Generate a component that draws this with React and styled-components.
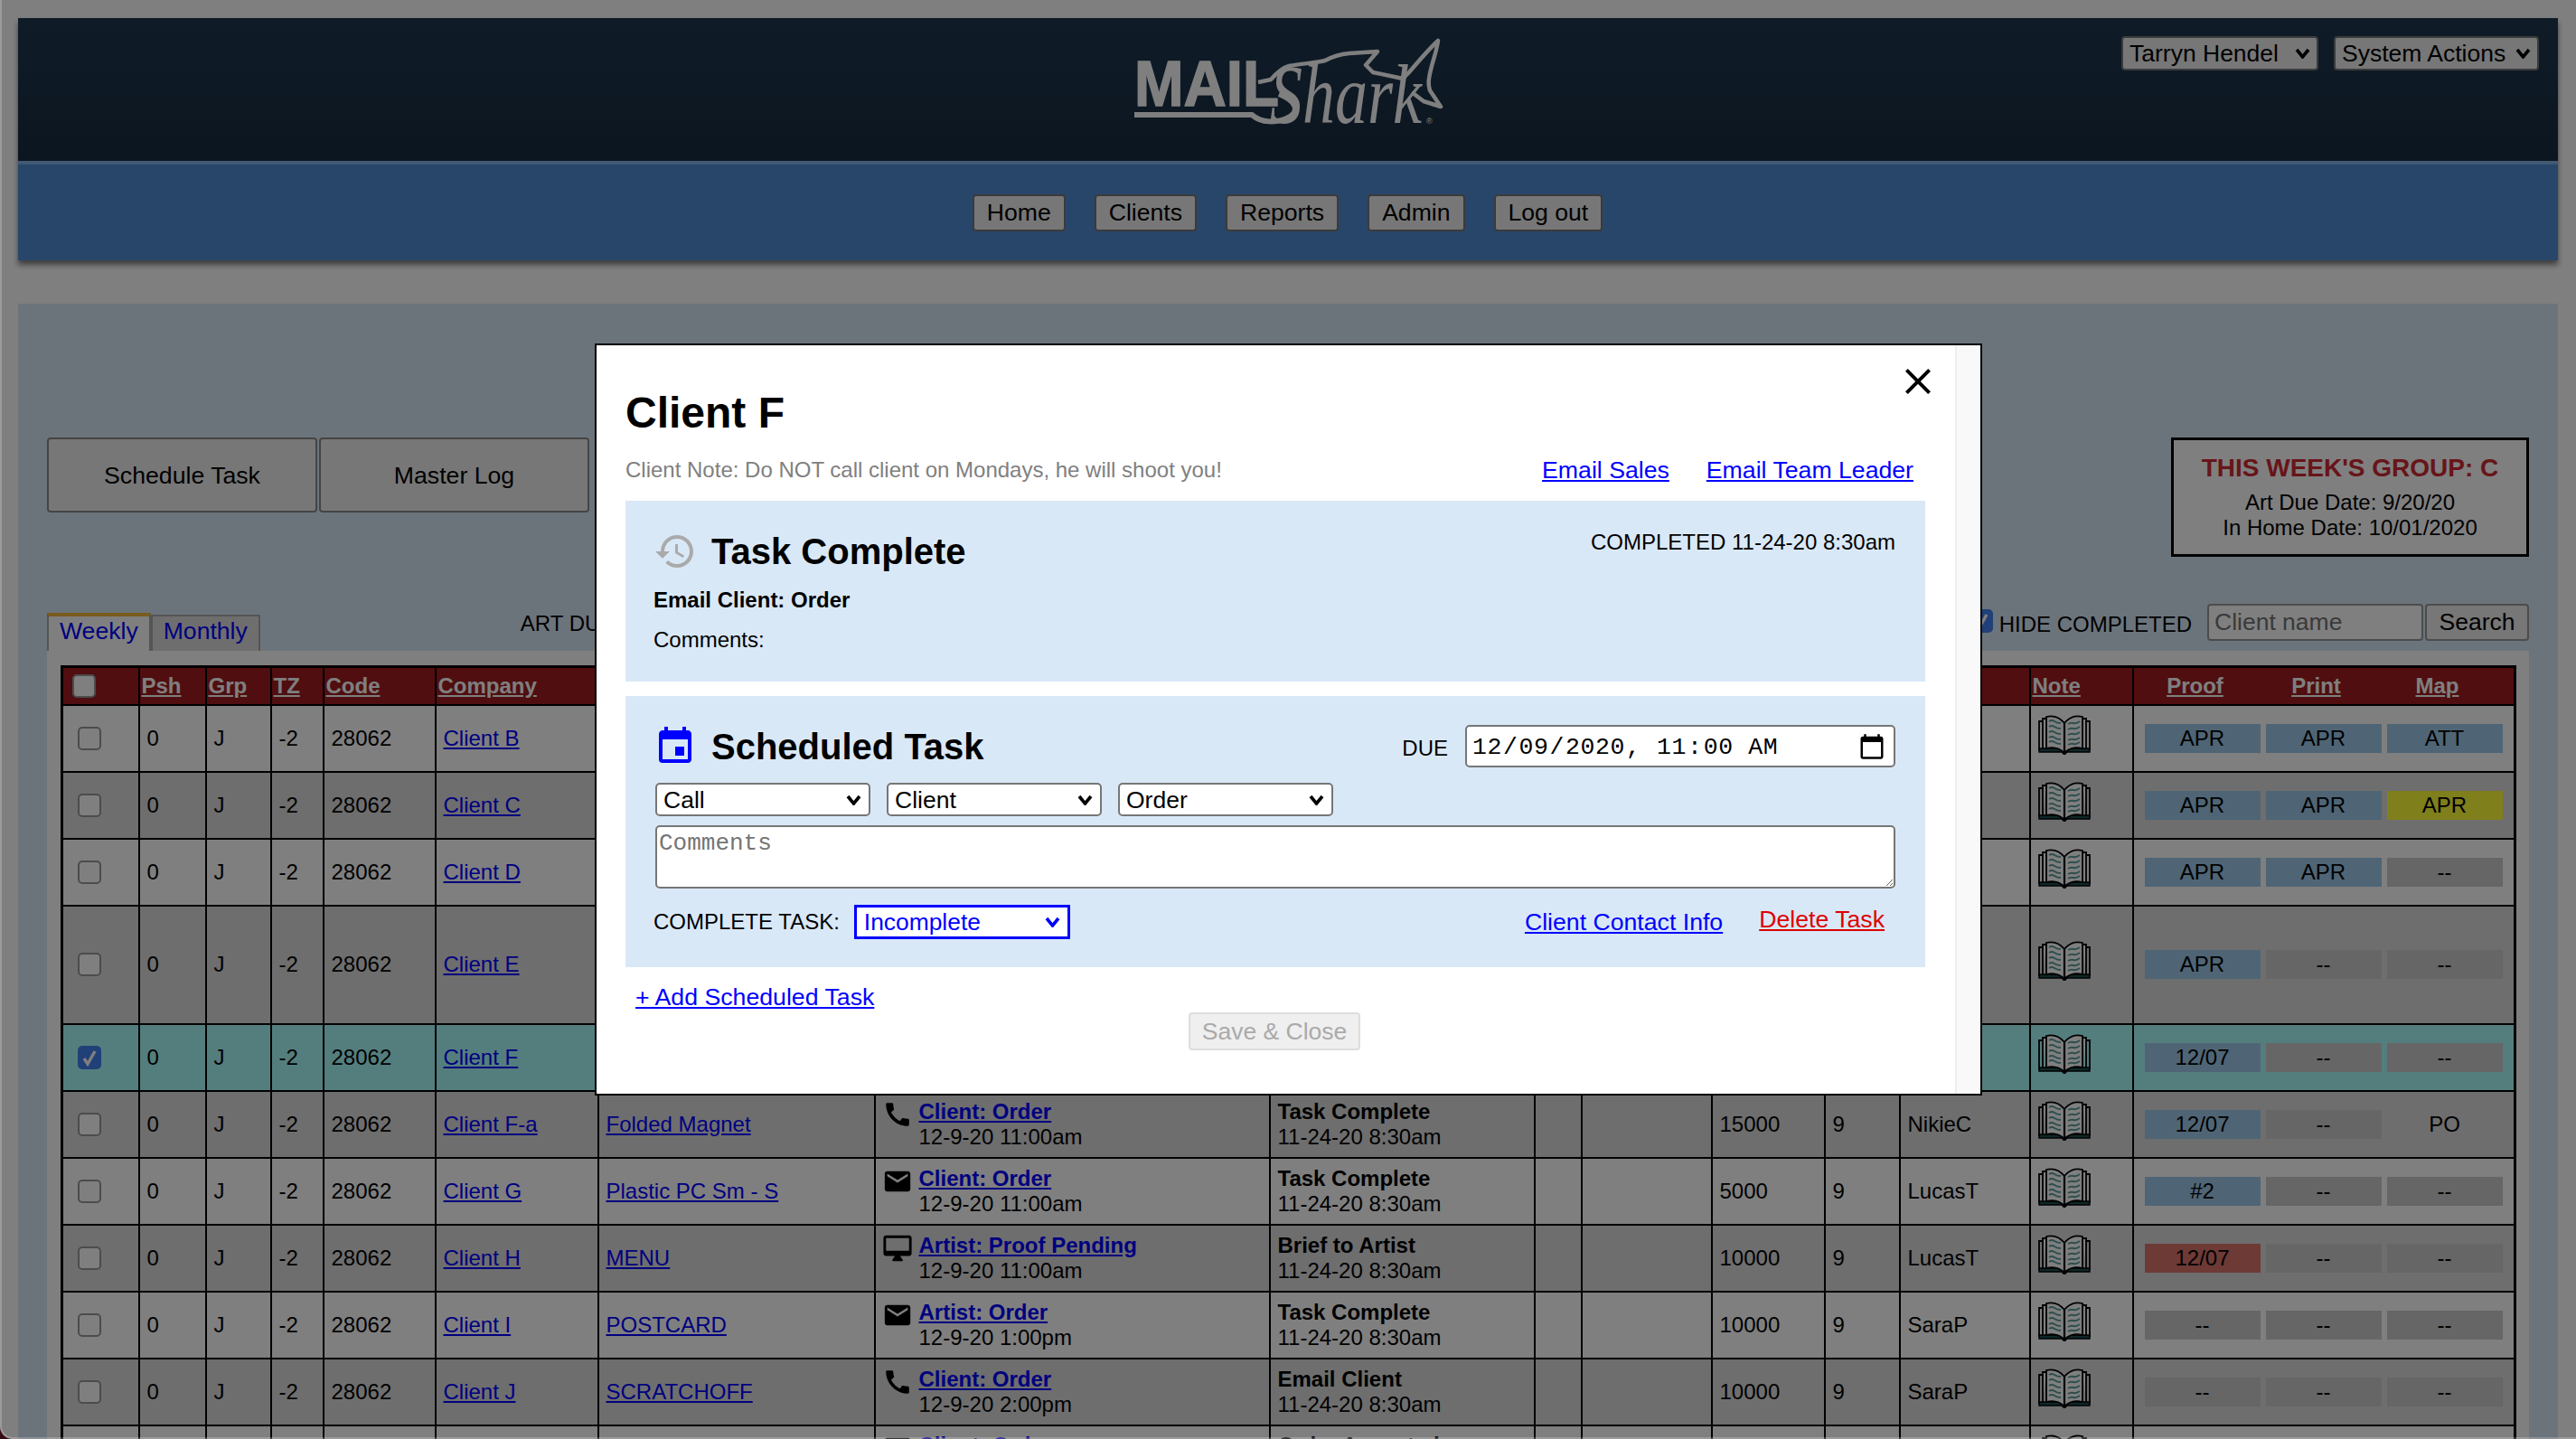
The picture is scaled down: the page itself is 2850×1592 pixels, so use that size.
import React from "react";
import styled, { createGlobalStyle } from "styled-components";
import { MdHistory, MdEvent, MdClose, MdCall, MdEmail } from "react-icons/md";

const chevron = (c) =>
  `url("data:image/svg+xml,${encodeURIComponent(
    `<svg xmlns='http://www.w3.org/2000/svg' viewBox='0 0 17 12'><path d='M2 2l6.5 8L15 2' fill='none' stroke='${c}' stroke-width='3.6'/></svg>`
  )}")`;

const checkMark = `url("data:image/svg+xml,${encodeURIComponent(
  `<svg xmlns='http://www.w3.org/2000/svg' viewBox='0 0 26 26'><path d='M7 14l4 6 8-14' fill='none' stroke='white' stroke-width='3.4'/></svg>`
)}")`;

const Global = createGlobalStyle`
  html, body { margin: 0; height: 100%; overflow: hidden; background: #fff; }
  body { font-family: "Liberation Sans", Arial, sans-serif; font-size: 24px; line-height: 28px; color: #000; }
  * { box-sizing: border-box; }
`;

const Page = styled.div`
  padding: 20px;
  width: 2850px;
`;

const TopBar = styled.header`
  box-shadow: 0 5px 6px rgba(0, 0, 0, 0.5);
`;

const BrandBar = styled.div`
  height: 158px;
  background: linear-gradient(#1e3850, #182c40);
  display: grid;
  grid-template-columns: 1fr auto 1fr;
  padding: 20px 21px 0 21px;
`;

const LogoSvg = styled.svg`
  display: block;
  width: 340px;
  height: 104px;
  margin-top: 4px;
  overflow: visible;
`;

const UserMenus = styled.div`
  display: flex;
  justify-content: flex-end;
  gap: 17px;
  align-items: flex-start;
`;

const HeadSelect = styled.select`
  appearance: none;
  width: ${(p) => p.$w}px;
  height: 38px;
  border: 2px solid #767676;
  border-radius: 4px;
  padding: 0 0 0 7px;
  font: 26.5px "Liberation Sans", Arial, sans-serif;
  color: #000;
  background: #efefef ${chevron("#000")} no-repeat right 7px center / 17px 12px;
`;

const NavBar = styled.nav`
  height: 110px;
  border-top: 4px solid #82b4ea;
  background: #508cd2;
  display: flex;
  justify-content: center;
  align-items: center;
  gap: 32px;
  padding-right: 1px;
`;

const NavButton = styled.button`
  height: 41px;
  padding: 0 14px;
  border: 2px solid #767676;
  border-radius: 4px;
  background: #efefef;
  font: 26.6px "Liberation Sans", Arial, sans-serif;
  color: #000;
`;

const Panel = styled.main`
  margin-top: 48px;
  background: #d9e8f7;
  padding: 148px 32px 0;
`;

const ActionRow = styled.div`
  display: flex;
  justify-content: space-between;
  align-items: flex-start;
`;

const BigButtons = styled.div`
  display: flex;
  gap: 2px;
`;

const BigButton = styled.button`
  width: 299px;
  height: 83px;
  border: 2px solid #8a8a8a;
  border-radius: 4px;
  background: #efefef;
  font: 26.67px "Liberation Sans", Arial, sans-serif;
  color: #000;
  padding-top: 2px;
`;

const GroupBox = styled.aside`
  width: 396px;
  height: 132px;
  border: 3px solid #000;
  background: #fff;
  text-align: center;
  padding-top: 14px;
`;

const GroupTitle = styled.div`
  font-size: 28px;
  font-weight: 700;
  line-height: 34px;
  color: #cf2a32;
  margin-bottom: 7px;
`;

const Toolbar = styled.div`
  margin-top: 52px;
  height: 52px;
  display: flex;
  align-items: flex-start;
`;

const Tabs = styled.div`
  align-self: flex-end;
  display: flex;
  align-items: flex-end;
`;

const Tab = styled.a`
  height: ${(p) => (p.$active ? 42 : 40)}px;
  padding: 0 12px;
  border: 2px solid #aaa;
  border-bottom: 0;
  border-top: ${(p) => (p.$active ? "4px solid #f0b63a" : "2px solid #aaa")};
  background: ${(p) => (p.$active ? "#fff" : "#ddd")};
  color: #00f;
  font-size: 26.6px;
  line-height: 33px;
`;

const ArtDue = styled.div`
  margin: 8px 0 0 288px;
  white-space: nowrap;
`;

const SearchTools = styled.div`
  margin-left: auto;
  display: flex;
  align-items: flex-start;
`;

const Check = styled.input.attrs({ type: "checkbox", readOnly: true })`
  appearance: none;
  margin: 0;
  width: 26px;
  height: 26px;
  border: 2px solid #999;
  border-radius: 5px;
  background: #fff;
  &:checked {
    border: 0;
    background: #4280f0 ${checkMark} center / 100% 100%;
  }
`;

const ToolCheck = styled(Check)`
  margin-top: 6px;
`;

const HideLabel = styled.label`
  margin: 9px 17px 0 7px;
  white-space: nowrap;
  font-size: 24px;
`;

const SearchInput = styled.input`
  width: 239px;
  height: 41px;
  border: 2px solid #999;
  border-radius: 4px;
  padding: 0 6px;
  font: 26.5px "Liberation Sans", Arial, sans-serif;
  background: #fff;
  &::placeholder { color: #757575; }
`;

const SearchButton = styled.button`
  width: 115px;
  height: 41px;
  margin-left: 2px;
  border: 2px solid #999;
  border-radius: 4px;
  background: #efefef;
  font: 26.5px "Liberation Sans", Arial, sans-serif;
  color: #000;
`;

const TableCard = styled.section`
  background: #fff;
  padding: 16px 16px 0 15px;
`;

const Grid = styled.table`
  table-layout: fixed;
  border-collapse: collapse;
  width: 2714px;
  border: 3px solid #000;
`;

const HeadRow = styled.tr`
  height: 42px;
  background: #a01c20;
`;

const HeadCell = styled.th`
  border: 2px solid #000;
  padding: 0 0 0 2px;
  text-align: left;
  font-size: 24px;
  line-height: 26px;
  font-weight: 700;
  color: #fff;
  text-decoration: underline;
  white-space: nowrap;
`;

const HeadTrio = styled.div`
  display: flex;
  gap: 6px;
  padding-left: 2px;
`;

const HeadLabel = styled.span`
  width: 128px;
  text-align: center;
`;

const rowBg = { light: "#fff", dark: "#dcdcdc", picked: "#a8fcfc" };

const Row = styled.tr`
  height: ${(p) => p.$h}px;
  background: ${(p) => rowBg[p.$tone]};
`;

const Cell = styled.td`
  border: 2px solid #000;
  padding: 0 0 0 8px;
  font-size: 24px;
  line-height: 28px;
  white-space: nowrap;
  overflow: hidden;
`;

const CheckCell = styled(Cell)`
  padding-left: 16px;
  & > input { display: block; }
`;

const HeadCheckCell = styled.th`
  border: 2px solid #000;
  padding: 0 0 0 10px;
  & > input { display: block; }
`;

const RowLink = styled.a`
  color: #00f;
  text-decoration: underline;
`;

const TaskWrap = styled.div`
  display: flex;
  gap: 7px;
  margin-left: -1px;
  svg { flex: none; }
`;

const TaskLink = styled.a`
  display: block;
  font-weight: 700;
  color: #00f;
  text-decoration: underline;
`;

const StatusName = styled.div`
  font-weight: 700;
`;

const BookHolder = styled.div`
  margin-bottom: 8px;
  height: 44px;
  svg { display: block; }
`;

const PillRow = styled.div`
  display: flex;
  gap: 6px;
  padding-left: 4px;
`;

const pillBg = { blue: "#9ecaea", yellow: "#fefe38", red: "#dc746c", none: "#ccc", clear: "transparent" };

const Pill = styled.div`
  width: 128px;
  height: 32px;
  line-height: 32px;
  text-align: center;
  background: ${(p) => pillBg[p.$kind]};
`;

const Backdrop = styled.div`
  position: fixed;
  inset: 0;
  background: rgba(0, 0, 0, 0.5);
  z-index: 5;
`;

const Modal = styled.div`
  position: fixed;
  z-index: 6;
  left: 658px;
  top: 380px;
  width: 1535px;
  height: 832px;
  border: 2px solid #000;
  background: #fff;
  display: flex;
`;

const ModalBody = styled.div`
  flex: 1;
  padding: 48px 33px 0 32px;
  min-width: 0;
`;

const ScrollTrack = styled.div`
  width: 28px;
  border-left: 2px solid #eee;
  background: #f9f9f9;
`;

const CloseBtn = styled.button`
  position: absolute;
  top: 16px;
  right: 45px;
  padding: 0;
  border: 0;
  background: none;
  line-height: 0;
  color: #000;
`;

const ClientTitle = styled.h2`
  margin: 0;
  font-size: 48px;
  line-height: 54px;
  font-weight: 700;
`;

const NoteRow = styled.div`
  margin: 16px 0 14px;
  height: 40px;
  display: flex;
  align-items: center;
  justify-content: space-between;
  padding-right: 13px;
`;

const NoteText = styled.span`
  color: #808080;
  font-size: 24px;
`;

const LinkGroup = styled.div`
  display: flex;
  gap: ${(p) => p.$gap}px;
  align-items: center;
`;

const ModalLink = styled.a`
  color: ${(p) => (p.$danger ? "#dd0000" : "#00f")};
  text-decoration: underline;
  font-size: 26.67px;
  line-height: 30px;
  margin-bottom: ${(p) => (p.$danger ? 6 : 0)}px;
`;

const TaskPanel = styled.div`
  background: #d9e8f7;
  height: ${(p) => p.$h}px;
  margin-bottom: 16px;
  padding: 32px 33px 0 31px;
`;

const TaskHead = styled.div`
  display: flex;
  align-items: flex-start;
  justify-content: space-between;
  height: 48px;
`;

const TaskTitleWrap = styled.div`
  display: flex;
  align-items: center;
  gap: 16px;
  height: 48px;
  svg { display: block; }
`;

const TaskTitle = styled.h3`
  margin: 0;
  font-size: 40px;
  line-height: 48px;
  font-weight: 700;
`;

const Completed = styled.div``;

const TaskSummary = styled.div`
  margin-top: 16px;
  font-weight: 700;
`;

const TaskComments = styled.div`
  margin-top: 16px;
`;

const DueWrap = styled.div`
  display: flex;
  align-items: flex-start;
  gap: 19px;
`;

const DueLabel = styled.span`
  line-height: 52px;
`;

const DueInput = styled.input`
  width: 476px;
  height: 47px;
  border: 2px solid #767676;
  border-radius: 5px;
  padding: 3px 8px 0 5px;
  font: 26.5px "Liberation Mono", "Courier New", monospace;
  letter-spacing: 0.6px;
  background: #fff;
  color: #000;
  &::-webkit-datetime-edit-ampm-field { margin-left: 6px; }
  &::-webkit-calendar-picker-indicator {
    width: 32px;
    height: 32px;
    padding: 0;
    margin: 0;
  }
`;

const SelectRow = styled.div`
  margin: 16px 0 0 2px;
  display: flex;
  gap: 18px;
`;

const TaskSelect = styled.select`
  appearance: none;
  width: 238px;
  height: 37px;
  border: 2px solid #767676;
  border-radius: 5px;
  padding: 0 0 0 7px;
  font: 26.5px "Liberation Sans", Arial, sans-serif;
  color: #000;
  background: #fff ${chevron("#000")} no-repeat right 8px center / 17px 12px;
`;

const CommentsBox = styled.textarea`
  display: block;
  margin: 10px 0 0 2px;
  width: 1372px;
  height: 70px;
  border: 2px solid #767676;
  border-radius: 5px;
  padding: 3px 2px 2px;
  font: 26px/30px "Liberation Mono", "Courier New", monospace;
  background: #fff;
  &::placeholder { color: #757575; }
`;

const CompleteRow = styled.div`
  margin-top: 18px;
  display: flex;
  align-items: center;
  justify-content: space-between;
  padding-right: 12px;
`;

const CompleteLeft = styled.div`
  display: flex;
  align-items: center;
  gap: 16px;
`;

const StateSelect = styled.select`
  appearance: none;
  width: 239px;
  height: 38px;
  border: 3px solid #00f;
  border-radius: 0;
  padding: 0 0 0 8px;
  font: 26.4px "Liberation Sans", Arial, sans-serif;
  color: #00f;
  background: #fff ${chevron("#00f")} no-repeat right 8px center / 17px 12px;
`;

const AddLink = styled.a`
  display: block;
  width: max-content;
  margin: 19px 0 0 11px;
  color: #00f;
  text-decoration: underline;
  font-size: 26.7px;
  line-height: 28px;
`;

const SaveRow = styled.div`
  display: flex;
  justify-content: center;
  margin-top: 3px;
  padding-right: 2px;
`;

const SaveButton = styled.button`
  width: 190px;
  height: 42px;
  border: 2px solid #ddd;
  border-radius: 4px;
  background: #efefef;
  color: #aaa;
  font: 26.5px "Liberation Sans", Arial, sans-serif;
`;

const WindowEdge = styled.div`
  position: fixed;
  inset: 0;
  z-index: 9;
  pointer-events: none;
  border-left: 2px solid rgba(255, 255, 255, 0.22);
  border-bottom: 2px solid rgba(255, 255, 255, 0.22);
  border-bottom-left-radius: 14px;
  box-shadow: 0 0 0 30px #380a12;
`;

const Logo = () => (
  <LogoSvg viewBox="0 0 340 104" aria-label="MailShark logo">
    <text x="0" y="73" fontFamily="Liberation Sans" fontWeight="700" fontSize="71" fill="#fff" stroke="#fff" strokeWidth="1.5" textLength="160" lengthAdjust="spacingAndGlyphs">MAIL</text>
    <path d="M0 83H130C140 92 158 93 172 85C182 79 180 68 160 60" fill="none" stroke="#fff" strokeWidth="6" />
    <path d="M137 47L151 44C158 36 164 31 171 29C185 26 200 26 211 23C220 18 228 16 238 15L269 13L256 28L264 36L297 43L304 36C316 22 326 10 336 1C334 16 328 28 326 43C325 50 326 52 327 56L339 74L320 68L307 58" fill="none" stroke="#fff" strokeWidth="4.5" strokeLinejoin="round" />
    <text x="150" y="92" fontFamily="Liberation Serif" fontStyle="italic" fontSize="94" fill="#fff" textLength="168" lengthAdjust="spacingAndGlyphs">Shark</text>
    <text x="323" y="93" fontFamily="Liberation Sans" fontSize="9" fill="#fff">®</text>
  </LogoSvg>
);

const Book = () => (
  <svg width="58" height="44" viewBox="0 0 58 44" aria-hidden="true">
    <path d="M1 37V41H26L29 44L32 41H57V37Z" fill="#1d5050" stroke="#000" strokeWidth="1.4" />
    <path d="M1 39V7H5M57 39V7H53" fill="none" stroke="#000" strokeWidth="1.8" />
    <path d="M5 38V4H9M53 38V4H49" fill="#fff" stroke="#000" strokeWidth="1.8" />
    <path d="M9 37V2C17 0 24 3 29 9C34 3 41 0 49 2V37C41 35 34 37 29 42C24 37 17 35 9 37Z" fill="#fff" stroke="#000" strokeWidth="1.8" />
    <path d="M29 9V42" stroke="#000" strokeWidth="2.2" />
    {[9, 15, 21, 27, 32].map((y) => (
      <g key={y} fill="none" stroke="#5c9a9a" strokeWidth="2">
        <path d={`M12 ${y - 2}q3 -2 6 0t7 2`} />
        <path d={`M33 ${y + 1}q3 -2 6 -1t7 -2`} />
      </g>
    ))}
  </svg>
);

const Monitor = () => (
  <svg width="34" height="34" viewBox="0 0 24 24" aria-hidden="true">
    <path
      fill="#000"
      fillRule="evenodd"
      d="M21 2H3c-1.1 0-2 .9-2 2v12c0 1.1.9 2 2 2h7l-2 3v1h8v-1l-2-3h7c1.1 0 2-.9 2-2V4c0-1.1-.9-2-2-2zm0 12H3V4h18v10z"
    />
  </svg>
);

const KindIcon = ({ kind }) => {
  if (kind === "phone") return <MdCall size={34} color="#000" />;
  if (kind === "mail") return <MdEmail size={34} color="#000" />;
  return <Monitor />;
};

const widths = [85, 74, 72, 58, 124, 180, 306, 437, 293, 52, 144, 125, 83, 144, 114, 423];

const rows = [
  { client: "Client B", tone: "light", h: 74, pills: [["APR", "blue"], ["APR", "blue"], ["ATT", "blue"]] },
  { client: "Client C", tone: "dark", h: 74, pills: [["APR", "blue"], ["APR", "blue"], ["APR", "yellow"]] },
  { client: "Client D", tone: "light", h: 74, pills: [["APR", "blue"], ["APR", "blue"], ["--", "none"]] },
  { client: "Client E", tone: "dark", h: 131, pills: [["APR", "blue"], ["--", "none"], ["--", "none"]] },
  { client: "Client F", tone: "picked", h: 74, checked: true, pills: [["12/07", "blue"], ["--", "none"], ["--", "none"]] },
  { client: "Client F-a", tone: "dark", h: 74, product: "Folded Magnet", icon: "phone", task: "Client: Order", when: "12-9-20 11:00am", status: "Task Complete", qty: "15000", wk: "9", rep: "NikieC", pills: [["12/07", "blue"], ["--", "none"], ["PO", "clear"]] },
  { client: "Client G", tone: "light", h: 74, product: "Plastic PC Sm - S", icon: "mail", task: "Client: Order", when: "12-9-20 11:00am", status: "Task Complete", qty: "5000", wk: "9", rep: "LucasT", pills: [["#2", "blue"], ["--", "none"], ["--", "none"]] },
  { client: "Client H", tone: "dark", h: 74, product: "MENU", icon: "screen", task: "Artist: Proof Pending", when: "12-9-20 11:00am", status: "Brief to Artist", qty: "10000", wk: "9", rep: "LucasT", pills: [["12/07", "red"], ["--", "none"], ["--", "none"]] },
  { client: "Client I", tone: "light", h: 74, product: "POSTCARD", icon: "mail", task: "Artist: Order", when: "12-9-20 1:00pm", status: "Task Complete", qty: "10000", wk: "9", rep: "SaraP", pills: [["--", "none"], ["--", "none"], ["--", "none"]] },
  { client: "Client J", tone: "dark", h: 74, product: "SCRATCHOFF", icon: "phone", task: "Client: Order", when: "12-9-20 2:00pm", status: "Email Client", qty: "10000", wk: "9", rep: "SaraP", pills: [["--", "none"], ["--", "none"], ["--", "none"]] },
  { client: "Client K", tone: "light", h: 74, product: "POSTCARD", icon: "mail", task: "Client: Order", when: "12-9-20 2:00pm", status: "Order Accepted", qty: "10000", wk: "9", rep: "SaraP", pills: [["--", "none"], ["--", "none"], ["--", "none"]] },
];

export default function App() {
  return (
    <>
      <Global />
      <Page>
        <TopBar>
          <BrandBar>
            <div />
            <Logo />
            <UserMenus>
              <HeadSelect $w={218}><option>Tarryn Hendel</option></HeadSelect>
              <HeadSelect $w={227}><option>System Actions</option></HeadSelect>
            </UserMenus>
          </BrandBar>
          <NavBar>
            {["Home", "Clients", "Reports", "Admin", "Log out"].map((n) => (
              <NavButton key={n}>{n}</NavButton>
            ))}
          </NavBar>
        </TopBar>
        <Panel>
          <ActionRow>
            <BigButtons>
              <BigButton>Schedule Task</BigButton>
              <BigButton>Master Log</BigButton>
            </BigButtons>
            <GroupBox>
              <GroupTitle>THIS WEEK'S GROUP: C</GroupTitle>
              <div>Art Due Date: 9/20/20</div>
              <div>In Home Date: 10/01/2020</div>
            </GroupBox>
          </ActionRow>
          <Toolbar>
            <Tabs>
              <Tab $active>Weekly</Tab>
              <Tab>Monthly</Tab>
            </Tabs>
            <ArtDue>ART DUE DATE: 9/20/20</ArtDue>
            <SearchTools>
              <ToolCheck defaultChecked />
              <HideLabel>HIDE COMPLETED</HideLabel>
              <SearchInput placeholder="Client name" />
              <SearchButton>Search</SearchButton>
            </SearchTools>
          </Toolbar>
          <TableCard>
            <Grid>
              <colgroup>
                {widths.map((w, i) => (
                  <col key={i} width={w} />
                ))}
              </colgroup>
              <thead>
                <HeadRow>
                  <HeadCheckCell><Check /></HeadCheckCell>
                  <HeadCell>Psh</HeadCell>
                  <HeadCell>Grp</HeadCell>
                  <HeadCell>TZ</HeadCell>
                  <HeadCell>Code</HeadCell>
                  <HeadCell>Company</HeadCell>
                  <HeadCell>Product</HeadCell>
                  <HeadCell>Task</HeadCell>
                  <HeadCell>Status</HeadCell>
                  <HeadCell />
                  <HeadCell />
                  <HeadCell>Qty</HeadCell>
                  <HeadCell>Wk</HeadCell>
                  <HeadCell />
                  <HeadCell>Note</HeadCell>
                  <HeadCell>
                    <HeadTrio>
                      <HeadLabel>Proof</HeadLabel>
                      <HeadLabel>Print</HeadLabel>
                      <HeadLabel>Map</HeadLabel>
                    </HeadTrio>
                  </HeadCell>
                </HeadRow>
              </thead>
              <tbody>
                {rows.map((r) => (
                  <Row key={r.client} $tone={r.tone} $h={r.h}>
                    <CheckCell><Check defaultChecked={!!r.checked} /></CheckCell>
                    <Cell>0</Cell>
                    <Cell>J</Cell>
                    <Cell>-2</Cell>
                    <Cell>28062</Cell>
                    <Cell><RowLink>{r.client}</RowLink></Cell>
                    <Cell>{r.product && <RowLink>{r.product}</RowLink>}</Cell>
                    <Cell>
                      {r.task && (
                        <TaskWrap>
                          <KindIcon kind={r.icon} />
                          <div>
                            <TaskLink>{r.task}</TaskLink>
                            <div>{r.when}</div>
                          </div>
                        </TaskWrap>
                      )}
                    </Cell>
                    <Cell>
                      {r.status && (
                        <>
                          <StatusName>{r.status}</StatusName>
                          <div>11-24-20 8:30am</div>
                        </>
                      )}
                    </Cell>
                    <Cell />
                    <Cell />
                    <Cell>{r.qty}</Cell>
                    <Cell>{r.wk}</Cell>
                    <Cell>{r.rep}</Cell>
                    <Cell><BookHolder><Book /></BookHolder></Cell>
                    <Cell>
                      <PillRow>
                        {r.pills.map(([t, k], i) => (
                          <Pill key={i} $kind={k}>{t}</Pill>
                        ))}
                      </PillRow>
                    </Cell>
                  </Row>
                ))}
              </tbody>
            </Grid>
          </TableCard>
        </Panel>
      </Page>
      <Backdrop />
      <Modal>
        <ModalBody>
          <CloseBtn aria-label="Close"><MdClose size={48} /></CloseBtn>
          <ClientTitle>Client F</ClientTitle>
          <NoteRow>
            <NoteText>Client Note: Do NOT call client on Mondays, he will shoot you!</NoteText>
            <LinkGroup $gap={41}>
              <ModalLink>Email Sales</ModalLink>
              <ModalLink>Email Team Leader</ModalLink>
            </LinkGroup>
          </NoteRow>
          <TaskPanel $h={200}>
            <TaskHead>
              <TaskTitleWrap>
                <MdHistory size={48} color="#aaa" />
                <TaskTitle>Task Complete</TaskTitle>
              </TaskTitleWrap>
              <Completed>COMPLETED 11-24-20 8:30am</Completed>
            </TaskHead>
            <TaskSummary>Email Client: Order</TaskSummary>
            <TaskComments>Comments:</TaskComments>
          </TaskPanel>
          <TaskPanel $h={300}>
            <TaskHead>
              <TaskTitleWrap>
                <MdEvent size={48} color="#0000ff" />
                <TaskTitle>Scheduled Task</TaskTitle>
              </TaskTitleWrap>
              <DueWrap>
                <DueLabel>DUE</DueLabel>
                <DueInput type="datetime-local" defaultValue="2020-12-09T11:00" />
              </DueWrap>
            </TaskHead>
            <SelectRow>
              <TaskSelect><option>Call</option></TaskSelect>
              <TaskSelect><option>Client</option></TaskSelect>
              <TaskSelect><option>Order</option></TaskSelect>
            </SelectRow>
            <CommentsBox placeholder="Comments" />
            <CompleteRow>
              <CompleteLeft>
                <span>COMPLETE TASK:</span>
                <StateSelect><option>Incomplete</option></StateSelect>
              </CompleteLeft>
              <LinkGroup $gap={40}>
                <ModalLink>Client Contact Info</ModalLink>
                <ModalLink $danger>Delete Task</ModalLink>
              </LinkGroup>
            </CompleteRow>
          </TaskPanel>
          <AddLink>+ Add Scheduled Task</AddLink>
          <SaveRow><SaveButton disabled>Save &amp; Close</SaveButton></SaveRow>
        </ModalBody>
        <ScrollTrack />
      </Modal>
      <WindowEdge />
    </>
  );
}
